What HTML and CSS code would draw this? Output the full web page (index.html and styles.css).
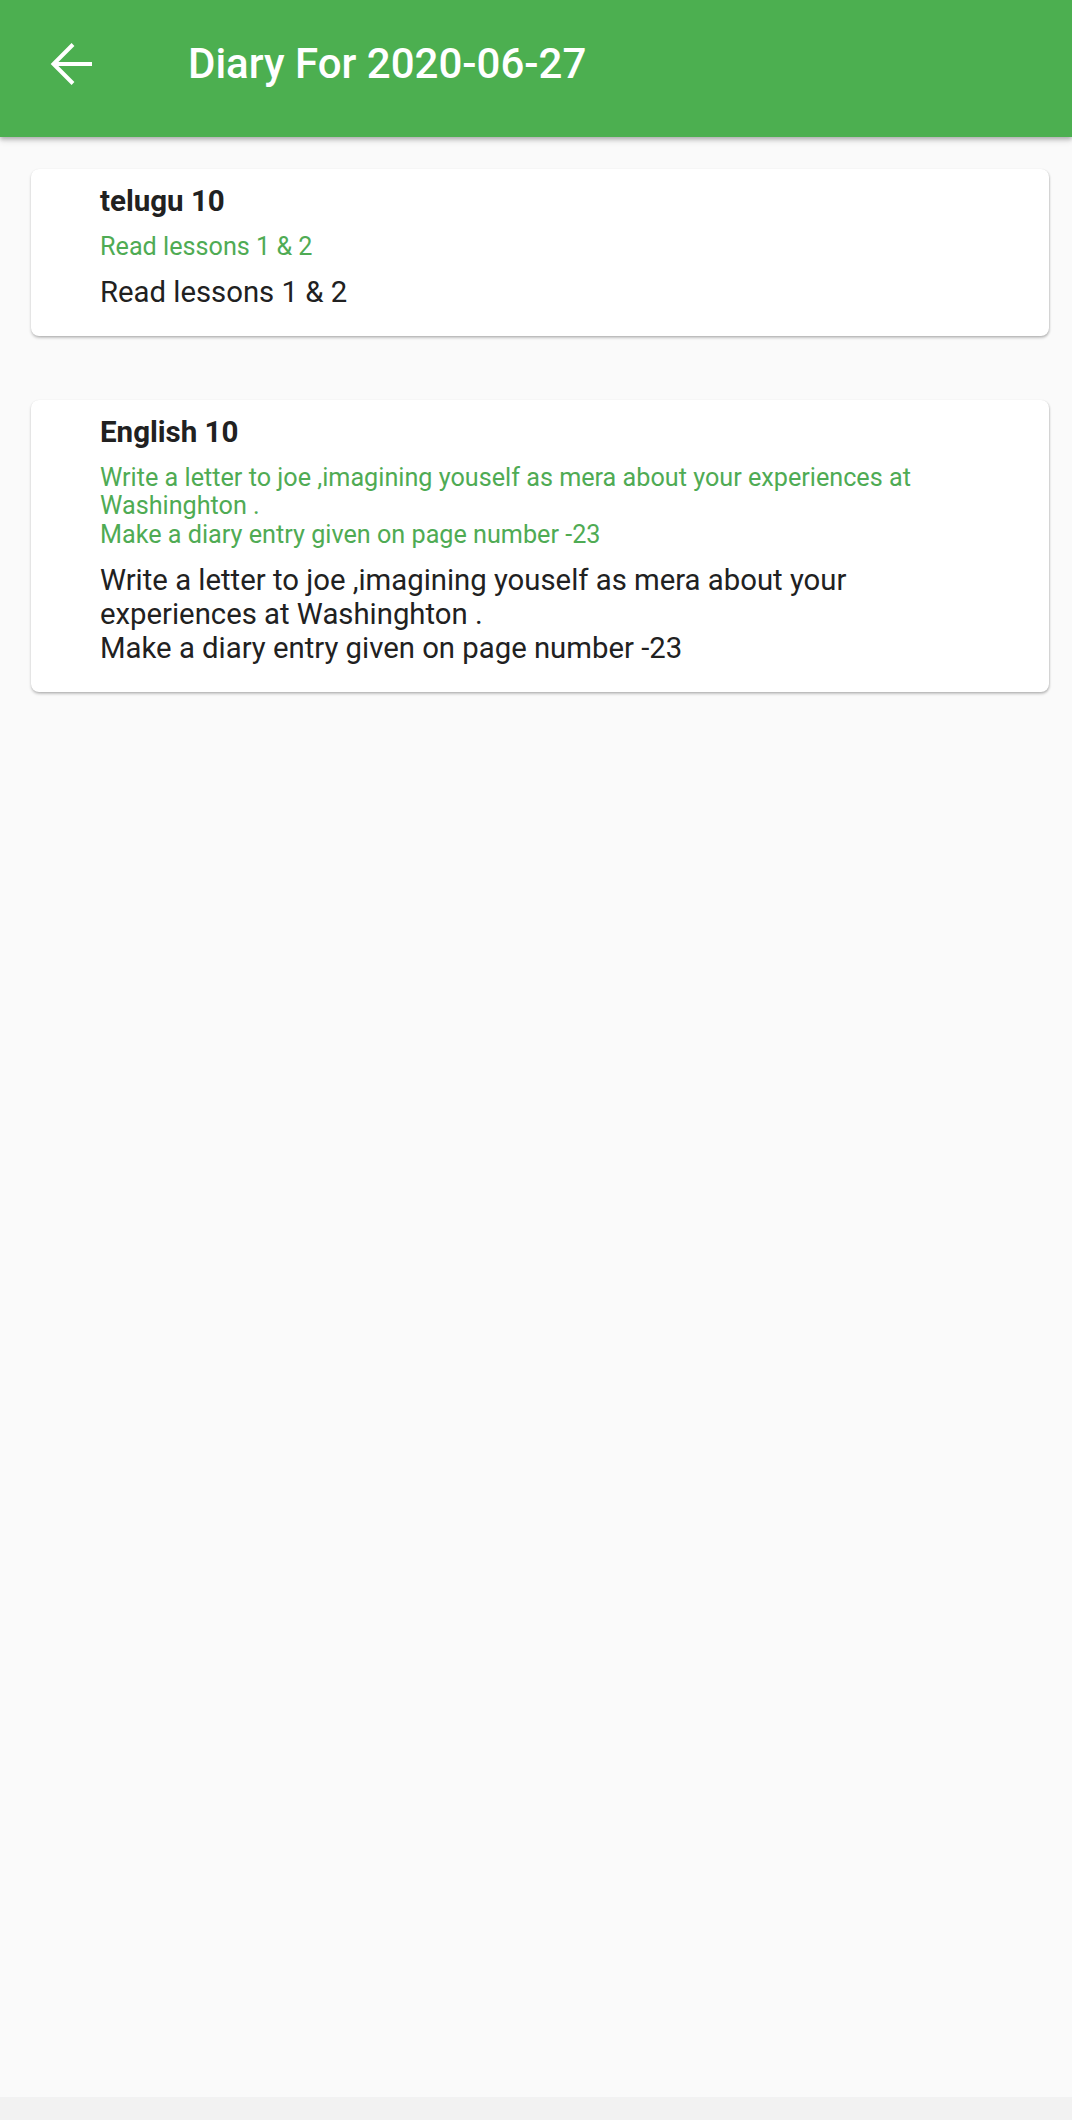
FILE: index.html
```html
<!DOCTYPE html>
<html>
<head>
<meta charset="utf-8">
<link rel="stylesheet" href="styles.css">
</head>
<body>
<div class="screen">
  <header class="appbar">
    <svg class="back" width="44" height="44" viewBox="0 0 44 44">
      <path d="M3.5 22 H42 M23 2.5 L3.5 22 L23 41.5" fill="none" stroke="#fff" stroke-width="4" stroke-linecap="butt" stroke-linejoin="miter"/>
    </svg>
    <h1 class="title">Diary For 2020-06-27</h1>
  </header>
  <main class="list">
    <section class="card">
      <div class="subject">telugu 10</div>
      <div class="summary">Read lessons 1 &amp; 2</div>
      <div class="detail">Read lessons 1 &amp; 2</div>
    </section>
    <section class="card">
      <div class="subject">English 10</div>
      <div class="summary">Write a letter to joe ,imagining youself as mera about your experiences at<br>Washinghton .<br>Make a diary entry given on page number -23</div>
      <div class="detail">Write a letter to joe ,imagining youself as mera about your<br>experiences at Washinghton .<br>Make a diary entry given on page number -23</div>
    </section>
  </main>
  <footer class="navstrip"></footer>
</div>
</body>
</html>
```

FILE: styles.css
```css
html, body {
  margin: 0;
  padding: 0;
}
body {
  font-family: Roboto, "Noto Sans", "Liberation Sans", sans-serif;
  background: #fafafa;
}
.screen {
  width: 1072px;
  height: 2120px;
  display: flex;
  flex-direction: column;
  background: #fafafa;
}
.appbar {
  height: 137px;
  flex: 0 0 137px;
  background: #4caf50;
  display: flex;
  align-items: center;
  box-shadow: 0 2px 4px rgba(0,0,0,0.22), 0 4px 6px rgba(0,0,0,0.12);
  position: relative;
  z-index: 2;
  box-sizing: border-box;
  padding-bottom: 10px;
}
.back {
  margin-left: 50px;
  flex: 0 0 auto;
}
.title {
  margin: 0 0 0 94px;
  font-size: 42px;
  font-weight: 500;
  color: #fff;
  line-height: 41px;
  white-space: nowrap;
}
.list {
  flex: 1;
  padding: 32px 23px 0 31px;
  display: flex;
  flex-direction: column;
  gap: 64px;
}
.card {
  background: #fff;
  border-radius: 8px;
  box-shadow: 0 2px 3px rgba(0,0,0,0.2), 1px 1px 2px rgba(0,0,0,0.1), 0 0 1px rgba(0,0,0,0.08);
  padding: 14.5px 29px 27px 69px;
}
.subject {
  font-size: 29.5px;
  font-weight: 700;
  color: #212121;
  line-height: 34px;
  margin-bottom: 15px;
}
.summary {
  font-size: 25.2px;
  color: #4fab54;
  line-height: 28.5px;
  margin-bottom: 14px;
}
.detail {
  font-size: 29.3px;
  color: #212121;
  line-height: 34px;
}
.navstrip {
  flex: 0 0 23px;
  background: #f2f2f2;
}
```
